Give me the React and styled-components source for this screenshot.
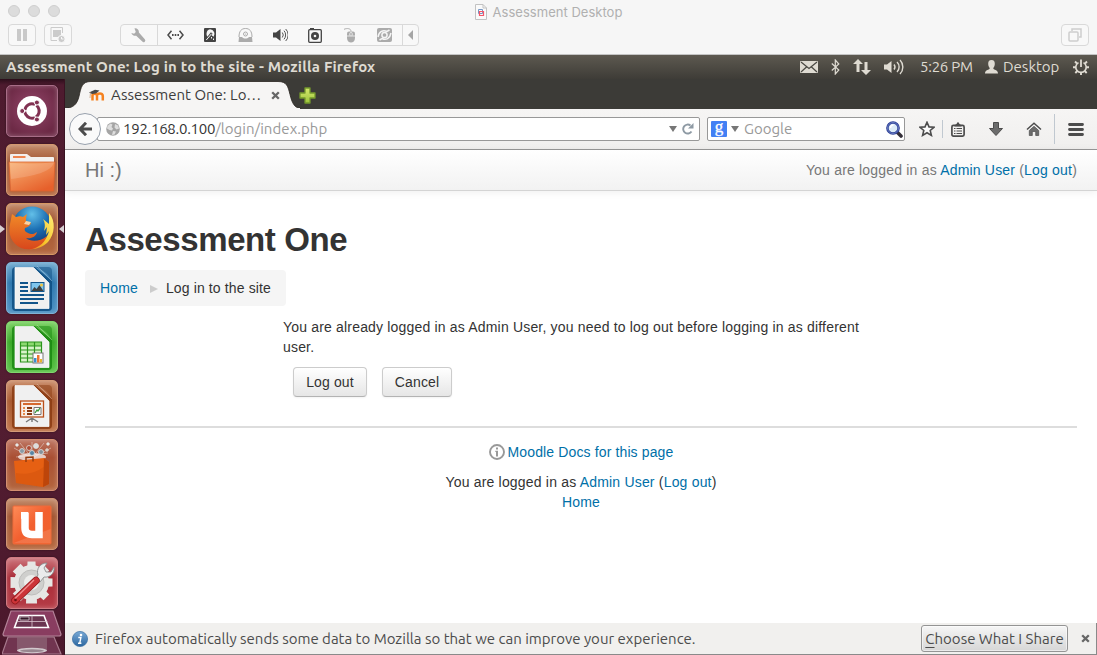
import React from "react";
import styled, { createGlobalStyle } from "styled-components";

const GlobalStyle = createGlobalStyle`
  * { box-sizing: border-box; }
  body { margin: 0; background: #fff; overflow: hidden; }
  svg { display: block; flex: none; }
  button { font: inherit; color: inherit; margin: 0; letter-spacing: inherit; }
`;

const UI_FONT = `Ubuntu, "Noto Sans", "Open Sans", sans-serif`;
const PAGE_FONT = `"Liberation Sans", Arial, sans-serif`;

const Screen = styled.div`
  width: 1097px;
  height: 655px;
  display: flex;
  flex-direction: column;
  overflow: hidden;
  font-family: ${UI_FONT};
  font-size: 15px;
`;

/* ---------- host window ---------- */
const HostBar = styled.header`
  height: 55px;
  flex: none;
  background: #f6f6f6;
  border-bottom: 1px solid #c4c4c4;
`;
const HostTitleRow = styled.div`
  height: 24px;
  display: grid;
  grid-template-columns: 1fr auto 1fr;
  align-items: center;
  padding: 0 8px 0 8px;
`;
const Lights = styled.div`
  display: flex;
  gap: 8px;
  padding-bottom: 2px;
`;
const Light = styled.i`
  width: 12px;
  height: 12px;
  border-radius: 50%;
  background: #dcdcdc;
  border: 1px solid #cfcfcf;
`;
const HostTitle = styled.div`
  display: flex;
  align-items: center;
  gap: 6px;
  font: 13px Inter, sans-serif;
  letter-spacing: 0.02px;
  color: #b0b0b0;
`;
const HostTools = styled.div`
  display: flex;
  padding: 0 8px;
  height: 22px;
`;
const HostButton = styled.button`
  width: ${(p) => p.$w || 28}px;
  height: 22px;
  margin-right: ${(p) => p.$gap || 0}px;
  margin-left: ${(p) => p.$push || 0};
  padding: 0;
  display: flex;
  align-items: center;
  justify-content: center;
  background: #f8f8f8;
  border: 1px solid #d9d9d9;
  border-radius: 4px;
`;
const ToolGroup = styled.div`
  width: 299px;
  display: flex;
  border: 1px solid #d9d9d9;
  border-radius: 4px;
  background: #f8f8f8;
`;
const Tool = styled.div`
  width: ${(p) => p.$w || 35}px;
  padding-right: 1px;
  display: flex;
  align-items: center;
  justify-content: center;
  border-right: ${(p) => (p.$line ? "1px solid #d9d9d9" : "0")};
`;

/* ---------- desktop panel ---------- */
const Panel = styled.div`
  height: 24px;
  flex: none;
  display: flex;
  align-items: center;
  background: linear-gradient(#5d5950, #3e3c37);
  color: #dfdbd2;
  padding: 0 8px 0 6px;
`;
const UiText = styled.span`
  font-family: ${UI_FONT};
  font-size: ${(p) => p.$size || 15}px;
  font-weight: ${(p) => p.$weight || 400};
  letter-spacing: ${(p) => p.$track || 0}px;
  color: ${(p) => p.$color || "inherit"};
  white-space: nowrap;
  line-height: 20px;
`;
const Indicators = styled.div`
  margin-left: auto;
  display: flex;
  align-items: center;
`;
const Slot = styled.div`
  width: ${(p) => p.$w}px;
  flex: none;
  display: flex;
  align-items: center;
`;
const Desktop = styled.div`
  flex: 1;
  min-height: 0;
  display: flex;
`;

/* ---------- launcher ---------- */
const Launcher = styled.nav`
  width: 65px;
  flex: none;
  padding: 6px 0 0 6px;
  display: flex;
  flex-direction: column;
  gap: 7px;
  background: linear-gradient(#2b0e1a 0, #4e1b2f 6px, #541e32 50%, #4b182c);
  border-right: 1px solid #3a1322;
`;
const Tile = styled.div`
  position: relative;
  width: 52px;
  height: 52px;
  flex: none;
  border-radius: 5px;
  background: ${(p) => p.$bg};
  border: 1px solid ${(p) => p.$edge};
  box-shadow: inset 0 0 5px rgba(255, 255, 255, 0.28), 0 0 2px rgba(0, 0, 0, 0.5);
  svg { margin: -1px; }
`;
const Marker = styled.i`
  position: absolute;
  top: 21px;
  ${(p) => (p.$right ? "right: -7px; border-right: 5px solid #d8d0d3;" : "left: -7px; border-left: 5px solid #d8d0d3;")}
  border-top: 4px solid transparent;
  border-bottom: 4px solid transparent;
`;
const Folded = styled.div`
  margin: -6px 0 0 -4px;
`;

/* ---------- browser ---------- */
const Browser = styled.main`
  flex: 1;
  min-width: 0;
  display: flex;
  flex-direction: column;
`;
const TabStrip = styled.div`
  height: 30px;
  flex: none;
  display: flex;
  align-items: flex-start;
  background: #3c3b37;
`;
const Tab = styled.div`
  position: relative;
  width: 235px;
  height: 30px;
  display: flex;
  align-items: center;
  padding: 2px 9px 0 24px;
`;
const TabShape = styled.svg`
  position: absolute;
  left: 0;
  top: 0;
`;
const TabLabel = styled.div`
  position: relative;
  flex: 1;
  display: flex;
  align-items: center;
  gap: 6px;
  color: #3c3c3c;
`;
const CloseGlyph = styled.div`
  margin-left: auto;
  margin-right: ${(p) => p.$right || 0}px;
`;
const NewTab = styled.div`
  margin: 8px 0 0 -1px;
`;
const NavBar = styled.div`
  height: 41px;
  flex: none;
  display: flex;
  align-items: center;
  background: linear-gradient(#f6f5f4, #f0efee);
  border-bottom: 1px solid #979797;
  padding: 0 13px 0 4px;
`;
const BackButton = styled.button`
  width: 32px;
  height: 32px;
  z-index: 1;
  flex: none;
  border-radius: 50%;
  border: 1px solid #98a1ad;
  background: #fafafa;
  padding: 0;
  display: flex;
  align-items: center;
  justify-content: center;
`;
const Field = styled.div`
  width: ${(p) => p.$w}px;
  height: 24px;
  flex: none;
  margin-left: ${(p) => p.$ml}px;
  padding: 0 ${(p) => p.$pr}px 0 ${(p) => p.$pl}px;
  display: flex;
  align-items: center;
  background: #fff;
  border: 1px solid #989898;
  border-radius: 2px;
`;
const FieldEnd = styled.div`
  margin-left: auto;
  display: flex;
  align-items: center;
  gap: 5px;
`;
const NavIcons = styled.div`
  margin-left: auto;
  display: flex;
  align-items: center;
`;
const Rule = styled.i`
  width: 1px;
  height: ${(p) => p.$h}px;
  margin: 0 ${(p) => p.$r}px 0 ${(p) => p.$l}px;
  background: #c0c8d0;
`;

/* ---------- web page ---------- */
const Page = styled.div`
  flex: 1;
  min-height: 0;
  background: #fff;
  color: #333;
  font: 14px/20px ${PAGE_FONT};
  letter-spacing: 0.13px;
`;
const SiteHeader = styled.div`
  height: 41px;
  display: flex;
  align-items: center;
  justify-content: space-between;
  padding: 0 20px;
  color: #777;
  background: linear-gradient(#fff, #f2f2f2);
  border-bottom: 1px solid #d4d4d4;
  box-shadow: 0 1px 8px rgba(0, 0, 0, 0.07);
`;
const SiteName = styled.div`
  font-size: 20px;
  letter-spacing: 0;
`;
const Copy = styled.span`
  letter-spacing: ${(p) => p.$track}px;
`;
const Link = styled.a`
  color: #0070a8;
  text-decoration: none;
`;
const PageBody = styled.div`
  padding: 29px 20px 0;
`;
const Heading = styled.h1`
  margin: 0;
  font-size: 33px;
  line-height: 40px;
  font-weight: 700;
  letter-spacing: -0.4px;
`;
const Crumbs = styled.div`
  margin-top: 10px;
  width: 201px;
  height: 36px;
  display: flex;
  align-items: center;
  padding: 0 15px;
  white-space: nowrap;
  background: #f5f5f5;
  border-radius: 4px;
`;
const CrumbArrow = styled.i`
  margin: 2px 8px 0 12px;
  border-left: 8px solid #ccc;
  border-top: 4px solid transparent;
  border-bottom: 4px solid transparent;
`;
const Notice = styled.div`
  width: 596px;
  margin: 11px auto 0;
`;
const Actions = styled.div`
  display: flex;
  gap: 15px;
  padding: 10px 10px 0;
`;
const PageButton = styled.button`
  width: ${(p) => p.$w}px;
  height: 30px;
  padding: 0;
  border: 1px solid #ccc;
  border-bottom-color: #b3b3b3;
  border-radius: 4px;
  background: linear-gradient(#fff, #e6e6e6);
  box-shadow: 0 1px 2px rgba(0, 0, 0, 0.05);
`;
const Footer = styled.footer`
  margin-top: 29px;
  border-top: 2px solid #ddd;
  padding-top: 14px;
  text-align: center;
`;
const Docs = styled.div`
  display: flex;
  justify-content: center;
  align-items: center;
  gap: 3px;
  margin-bottom: 10px;
`;

/* ---------- notification bar ---------- */
const NoticeBar = styled.div`
  height: 32px;
  flex: none;
  display: flex;
  align-items: center;
  gap: 7px;
  padding: 0 6px 0 7px;
  color: #4c4c4c;
  background: #f1f0ee;
  border-right: 1px solid #8a8a8a;
  border-bottom: 1px solid #8a8a8a;
`;
const ShareButton = styled.button`
  width: 147px;
  height: 27px;
  margin-left: auto;
  margin-right: 6px;
  padding: 0;
  border: 1px solid #949494;
  border-radius: 3px;
  background: linear-gradient(#f6f6f6, #d6d6d6);
  box-shadow: inset 0 0 0 1px rgba(255, 255, 255, 0.5);
  u { text-underline-offset: 3px; }
`;

const Cross = ({ color = "#666" }) => (
  <svg width="9" height="9" viewBox="0 0 9 9">
    <path d="M1.2 1.2l6.6 6.6M7.8 1.2L1.2 7.8" stroke={color} strokeWidth="2.3" />
  </svg>
);
const Down = () => (
  <svg width="8" height="6" viewBox="0 0 8 6"><path d="M0 0h8L4 6z" fill="#777" /></svg>
);

/* host toolbar icons */
const Pause = () => (
  <svg width="10" height="12"><path d="M0 0h4v12H0zM6 0h4v12H6z" fill="#c9c9c9" /></svg>
);
const Snapshot = () => (
  <svg width="16" height="16" viewBox="0 0 16 16" fill="none" stroke="#cbcbcb">
    <path d="M12.500 6V.500H1v13h6" /><path d="M3 3h8v7H3z" fill="#cbcbcb" stroke="none" />
    <circle cx="11.500" cy="12" r="3.600" fill="#cbcbcb" stroke="#f8f8f8" />
    <path d="M11.500 10v2h2" stroke="#f8f8f8" />
  </svg>
);
const Wrench = () => (
  <svg width="15" height="15" viewBox="0 0 15 15">
    <path d="M3.500.4C6 0 8.200 2 7.900 4.600l5.900 6.600a1.700 1.700 0 0 1-2.500 2.400L5.200 7.700C3.200 8.200.9 7 .4 4.900l2.700.8 1.700-1.800z" fill="#ababab" />
  </svg>
);
const Network = () => (
  <svg width="17" height="10" viewBox="0 0 17 10">
    <path d="M4.500.8L1 5l3.500 4.200M12.500.8L16 5l-3.500 4.200" fill="none" stroke="#4b4b4b" strokeWidth="1.500" />
    <path d="M5 4h1.600v2H5zM7.700 4h1.600v2H7.700zM10.400 4H12v2h-1.600z" fill="#4b4b4b" />
  </svg>
);
const Disk = () => (
  <svg width="12" height="14" viewBox="0 0 12 14">
    <rect width="12" height="14" rx="1" fill="#444" />
    <path d="M6 1.300a4.600 4.600 0 0 1 3.600 7.400L7.300 7 5 9.700A4.500 4.500 0 0 1 6 1.300z" fill="#f5f5f5" />
    <path d="M2 12.300L7.800 5" stroke="#444" strokeWidth="2.200" /><path d="M2.300 12L7.500 5.800M7.500 9v1.500M9.500 10.500V12" stroke="#f5f5f5" />
  </svg>
);
const Cd = () => (
  <svg width="15" height="14" viewBox="0 0 15 14">
    <path d="M1 9C1 3 3.500.5 7.500.5S14 3 14 9" fill="none" stroke="#ababab" />
    <circle cx="7.500" cy="6" r="2" fill="none" stroke="#ababab" /><circle cx="7.500" cy="6" r=".6" fill="#ababab" />
    <path d="M1 9h3c2 2 5 2 7 0h3l.5 5H.5z" fill="#ababab" />
  </svg>
);
const HostSound = () => (
  <svg width="15" height="14" viewBox="0 0 15 14">
    <path d="M0 4.500h3L7.500 1v12L3 9.500H0z" fill="#444" />
    <path d="M9.300 4.500a4 4 0 0 1 0 5M11 2.700a6.500 6.500 0 0 1 0 8.600M12.700 1a8.500 8.500 0 0 1 0 12" fill="none" stroke="#555" />
  </svg>
);
const Camera = () => (
  <svg width="14" height="15" viewBox="0 0 14 15">
    <path d="M2 0h4v2H2z" fill="#444" /><rect x=".7" y="1.700" width="12.600" height="12.600" rx="1" fill="none" stroke="#444" strokeWidth="1.300" />
    <circle cx="7" cy="8" r="4" fill="#444" /><circle cx="7" cy="8" r="1.300" fill="#f5f5f5" />
  </svg>
);
const Mouse = () => (
  <svg width="12" height="15" viewBox="0 0 12 15">
    <path d="M0 1.300c3-1.300 7-1 7 2" fill="none" stroke="#ababab" />
    <path d="M3 5.500q0-2 2-2h4q2 0 2 2V10c0 6-8 6-8 0z" fill="#ababab" />
    <path d="M3 8h3.500M7.500 8H11" stroke="#f5f5f5" strokeWidth=".8" /><rect x="5.800" y="4.500" width="2.400" height="3.500" rx="1" fill="#ababab" stroke="#f5f5f5" strokeWidth=".8" />
  </svg>
);
const Share = () => (
  <svg width="15" height="14" viewBox="0 0 15 14">
    <rect width="15" height="14" rx="2" fill="#ababab" />
    <circle cx="7.500" cy="7" r="2.600" fill="none" stroke="#f5f5f5" strokeWidth="1.500" />
    <path d="M1 9C2 3.500 6 1.500 10 3.500L12.500 2M14 5c-1 5.500-5 7.500-9 5.500L2.500 12" fill="none" stroke="#f5f5f5" strokeWidth="1.500" />
  </svg>
);
const Windows = () => (
  <svg width="14" height="14" viewBox="0 0 14 14" fill="none" stroke="#cdcdcd" strokeWidth="1.500">
    <path d="M4 3V1h9v8h-2" /><rect x="1" y="4" width="9" height="9" rx="1" />
  </svg>
);
const DocIcon = () => (
  <svg width="12" height="16" viewBox="0 0 12 16">
    <path d="M.5.5h7.500l3.500 3.500v11.500H.5z" fill="#fafafa" stroke="#c2c2c2" /><path d="M8 .5V4h3.500" fill="none" stroke="#c2c2c2" />
    <path d="M3.500 5.500h4v4h-4z" fill="none" stroke="#7596c4" /><path d="M4.500 7.500h4v4h-4z" fill="none" stroke="#f3576a" strokeWidth="1.200" />
  </svg>
);

/* panel indicators */
const Mail = () => (
  <svg width="18" height="12" viewBox="0 0 18 12">
    <rect width="18" height="12" rx="1" fill="#dfdbd2" />
    <path d="M1 1l8 6.500L17 1M1 11l5.500-5M17 11l-5.500-5" fill="none" stroke="#4a4842" strokeWidth="1.200" />
  </svg>
);
const Bluetooth = () => (
  <svg width="9" height="16" viewBox="0 0 9 16">
    <path d="M.8 4.500l7 6.500L4.300 15V1L7.800 5l-7 6.500" fill="none" stroke="#dfdbd2" strokeWidth="1.200" />
  </svg>
);
const Arrows = () => (
  <svg width="18" height="16" viewBox="0 0 18 16" fill="#dfdbd2">
    <path d="M5 0l5 5H6.500v8h-3V5H0zM13 16l5-5h-3.500V3h-3v8H8z" />
  </svg>
);
const Sound = () => (
  <svg width="20" height="16" viewBox="0 0 20 16">
    <path d="M0 5.500h3L7.500 2v12L3 10.500H0z" fill="#dfdbd2" />
    <path d="M10 5.500a4 4 0 0 1 0 5M13 3a7 7 0 0 1 0 10M16 1a10 10 0 0 1 0 14" fill="none" stroke="#dfdbd2" strokeWidth="1.400" />
  </svg>
);
const Person = () => (
  <svg width="13" height="14" viewBox="0 0 13 14" fill="#dfdbd2">
    <path d="M6.500 0C9 0 9.800 1.500 9.800 4S8.500 7 8.300 8.500C8.300 10 13 9.600 13 13.500H0C0 9.600 4.700 10 4.700 8.500 4.500 7 3.200 6.500 3.200 4S4 0 6.500 0z" />
  </svg>
);
const Power = () => (
  <svg width="16" height="16" viewBox="0 0 16 16" fill="none" stroke="#dfdbd2">
    <path d="M5.500 3.600a5.200 5.200 0 1 0 5 0" strokeWidth="1.600" /><path d="M8 .5V8" strokeWidth="1.800" />
    <path d="M0 8.200h3M13 8.200h3M8 13v3M2 2.500l2 2M14 2.500l-2 2M2.300 14l2-2M13.700 14l-2-2" strokeWidth="1.900" />
  </svg>
);

/* browser icons */
const MoodleIcon = () => (
  <svg width="16" height="12" viewBox="0 0 16 12">
    <path d="M3.500 11.500V6.500c0-2.500 4.500-2.500 4.500 0v5-5c0-2.500 5.800-3 5.800.5v4.500" fill="none" stroke="#f58220" strokeWidth="2.500" />
    <path d="M0 3.500L6 .8l4.500.6L7 4.500 3 5z" fill="#484848" /><path d="M1.500 3.500L1 9" stroke="#c9a27e" strokeWidth=".8" />
  </svg>
);
const Plus = () => (
  <svg width="17" height="17" viewBox="0 0 17 17">
    <defs><linearGradient id="plus" x2="0" y2="1"><stop stopColor="#d5e86d" /><stop offset="1" stopColor="#9dc43c" /></linearGradient></defs>
    <path d="M6 1h5v5h5v5h-5v5H6v-5H1V6h5z" fill="url(#plus)" stroke="#74992c" strokeWidth="1.300" strokeLinejoin="round" />
  </svg>
);
const BackArrow = () => (
  <svg width="15" height="14" viewBox="0 0 15 14">
    <path d="M8 .8L2 7l6 6.200M2.500 7H14" fill="none" stroke="#4c4c4c" strokeWidth="3" />
  </svg>
);
const Globe = () => (
  <svg width="14" height="14" viewBox="0 0 14 14">
    <circle cx="7" cy="7" r="6.800" fill="#a5a5a5" />
    <path d="M1.500 4l3-2.500 2 1L5.500 5l1.500 1.500-1 2L3.500 8 1 6.500zM9 2l3 1.500 1 3-2.500 1L8.500 5.500zM7 9l3 .5-1.500 3L6 13z" fill="#dedede" />
  </svg>
);
const Reload = () => (
  <svg width="12" height="12" viewBox="0 0 12 12">
    <path d="M9.500 8.500a4.500 4.500 0 1 1-1-6" fill="none" stroke="#8e9aa4" strokeWidth="1.900" /><path d="M11.500 0v5.500H6z" fill="#8e9aa4" />
  </svg>
);
const GoogleBadge = styled.div`
  width: 16px;
  height: 16px;
  border-radius: 1px;
  background: #4280f4;
  color: #fff;
  font: 17px/11px "Liberation Serif", serif;
  -webkit-text-stroke: 0.3px #fff;
  text-align: center;
  margin-right: 4px;
`;
const Lens = () => (
  <svg width="17" height="17" viewBox="0 0 17 17">
    <path d="M11 11l4 4" stroke="#332e38" strokeWidth="3.600" strokeLinecap="round" />
    <circle cx="7" cy="7" r="5.600" fill="#dcebf7" stroke="#2c3f95" strokeWidth="2.500" />
    <circle cx="7" cy="7" r="5.500" fill="none" stroke="#7d91d2" strokeWidth=".7" />
    <path d="M4.500 7c0-2 1-3 3-3" fill="none" stroke="#fff" strokeWidth="1.500" />
  </svg>
);
const Star = () => (
  <svg width="16" height="16" viewBox="0 0 16 16">
    <path d="M8 1.300l2 4.600 5 .4-3.800 3.200 1.200 4.900L8 11.800l-4.400 2.600 1.200-4.900L1 6.300l5-.4z" fill="#fbfbfb" stroke="#4c4c4c" strokeWidth="1.600" />
  </svg>
);
const Clipboard = () => (
  <svg width="14" height="15" viewBox="0 0 14 15">
    <rect x=".9" y="3.400" width="12.200" height="10.700" rx="1.500" fill="none" stroke="#4c4c4c" strokeWidth="1.700" />
    <path d="M3.500 3c1-.5 2-.6 2.300-1.600C6.200 0 7.800 0 8.200 1.400 8.500 2.400 9.500 2.500 10.500 3v1.500h-7z" fill="#4c4c4c" />
    <path d="M3 6.500h1.500M3 9h1.500M3 11.500h1.500M5.500 6.500H11M5.500 9H11M5.500 11.500H11" stroke="#4c4c4c" strokeWidth="1.200" />
  </svg>
);
const Download = () => (
  <svg width="14" height="14" viewBox="0 0 14 14">
    <path d="M4.500.5h5v6h4L7 13.500.5 6.500h4z" fill="#6c6c6c" stroke="#4c4c4c" />
  </svg>
);
const HomeIcon = () => (
  <svg width="16" height="14" viewBox="0 0 16 14">
    <path d="M1 7.500l7-6.200 7 6.200" fill="none" stroke="#4c4c4c" strokeWidth="1.500" />
    <path d="M3.300 8.500L8 4.300l4.700 4.200v5H9.700V9.500H6.300v4h-3z" fill="#6c6c6c" stroke="#4c4c4c" strokeWidth=".7" />
  </svg>
);
const Menu = () => (
  <svg width="16" height="13" viewBox="0 0 16 13">
    <path d="M1.500 1.500h13M1.500 6.500h13M1.500 11.500h13" stroke="#4c4c4c" strokeWidth="2.800" strokeLinecap="round" />
  </svg>
);
const InfoRing = () => (
  <svg width="16" height="16" viewBox="0 0 16 16">
    <circle cx="8" cy="8" r="7" fill="none" stroke="#999" strokeWidth="1.900" />
    <path d="M7 3.500h2v2H7zM6.300 6.700H9v5.800H7V8h-.7z" fill="#999" />
  </svg>
);
const InfoBall = () => (
  <svg width="16" height="16" viewBox="0 0 16 16">
    <defs><linearGradient id="ball" x2="0" y2="1"><stop stopColor="#79a9d6" /><stop offset="1" stopColor="#2b669f" /></linearGradient></defs>
    <circle cx="8" cy="8" r="7.600" fill="url(#ball)" stroke="#3a6fa4" strokeWidth=".7" />
    <circle cx="9" cy="4" r="1.300" fill="#fff" /><path d="M6.300 6.500h2.600l-1.200 5.800M6 12.300h3.400" fill="none" stroke="#fff" strokeWidth="1.400" />
  </svg>
);

/* launcher artwork, each on a 52 x 52 tile */
const Dash = () => (
  <svg width="52" height="52" viewBox="0 0 52 52">
    <circle cx="26" cy="26" r="15" fill="#fff" />
    <circle cx="26" cy="26" r="7.200" fill="none" stroke="#813152" strokeWidth="3" strokeDasharray="13.500 1.580" strokeDashoffset="-.8" transform="rotate(60 26 26)" />
    {[60, 180, 300].map((a) => (
      <circle key={a} cx={26 + 9.8 * Math.cos((a * Math.PI) / 180)} cy={26 + 9.8 * Math.sin((a * Math.PI) / 180)} r="2.500" fill="#813152" stroke="#fff" strokeWidth="1" />
    ))}
  </svg>
);
const Folder = () => (
  <svg width="52" height="52" viewBox="0 0 52 52">
    <defs><linearGradient id="folder" x1="0" y1="0" x2=".7" y2="1"><stop stopColor="#f8b173" /><stop offset="1" stopColor="#e6602b" /></linearGradient></defs>
    <path d="M4 18v-7q0-1 1-1h16l4 3h22q1 0 1 1v5H4z" fill="#f3f0ee" />
    <path d="M7 12h12.500v2H7z" fill="#ee8550" />
    <path d="M3 18h46l-1.500 29h-43z" fill="url(#folder)" stroke="#d9622f" strokeWidth=".8" />
    <path d="M4 19c15 1 32 1 44-1-2 10-20 14-43 17z" fill="#fff" opacity=".15" />
  </svg>
);
const Fox = () => (
  <svg width="52" height="52" viewBox="0 0 52 52">
    <defs>
      <radialGradient id="sea" cx=".5" cy=".2" r=".8"><stop stopColor="#62bfe8" /><stop offset=".5" stopColor="#1c70b4" /><stop offset="1" stopColor="#133a79" /></radialGradient>
      <linearGradient id="fur" x2="0" y2="1"><stop stopColor="#f18a28" /><stop offset="1" stopColor="#d8471c" /></linearGradient>
      <linearGradient id="tail" x1="1" y1="0" x2="0" y2="1"><stop stopColor="#fff07a" /><stop offset=".6" stopColor="#f7c52a" /><stop offset="1" stopColor="#ec7423" /></linearGradient>
    </defs>
    <circle cx="26" cy="23" r="19.500" fill="url(#sea)" />
    <path d="M43 10c7 8 6 21-1 29-5 5-13 8-19 7 10-3 18-9 20-18l-3 4 1-8-3 4c2-7 0-10-1-12l6 5z" fill="url(#tail)" />
    <path d="M6 11l4 3c3-1 5-1 7 0l4-3c-1 3-1 5-1 7l5 2c-1 3-3 4-6 5-1 2 0 4 3 5 4 2 6 1 9-1-1 5-6 7-11 6 4 4 14 4 21-2-4 11-16 16-26 12C5 40 2 31 4 21l1-5z" fill="url(#fur)" />
    <path d="M20 18l5 1-2 3-5-1z" fill="#f9d3a4" />
  </svg>
);
const DocBase = ({ dark, children }) => (
  <svg width="52" height="52" viewBox="0 0 52 52">
    <path d="M6 9q0-4 4-4h19l17 14v26q0 4-4 4H10q-4 0-4-4z" fill={dark} opacity=".85" />
    <path d="M29 5C37 8 43 12 46 19V9q0-4-4-4z" fill={dark} opacity=".5" />
    <path d="M31 4l15 15" stroke="#fff" strokeWidth="1" opacity=".25" />
    <path d="M9 5.500h18.500L43 21v25.500H9z" fill="#f0f0f0" stroke="#fff" strokeWidth=".7" />
    {children}
  </svg>
);
const Writer = () => (
  <DocBase dark="#0d4c80">
    <path d="M14 21h8M14 25h8M14 29h8M14 33h24M14 37h24M14 41h18" stroke="#12558b" strokeWidth="2" />
    <rect x="25" y="20.500" width="13" height="9" fill="#7ec5ed" stroke="#12558b" /><path d="M25.500 29l3-4 2 2 3-4 4 6z" fill="#3d4142" /><circle cx="35.500" cy="23" r="1.500" fill="#f3c43d" />
  </DocBase>
);
const Calc = () => (
  <DocBase dark="#1a8710">
    <rect x="14.500" y="21" width="21" height="20" fill="#d8f3ca" /><path d="M14.500 21h21v4h-21z" fill="#8cd870" />
    <path d="M14.500 21h21v20h-21zM14.500 25h21M14.500 29h21M14.500 33h21M14.500 37h21M21.500 21v20M28.500 21v20" fill="none" stroke="#2a941c" strokeWidth="1.200" />
    <rect x="27" y="32" width="10" height="10" fill="#fff" stroke="#777" /><path d="M28 37h2.500v4.500H28z" fill="#3b8ccd" /><path d="M31 34h2.500v7.500H31z" fill="#ed7530" /><path d="M34 38h2v3.500h-2z" fill="#e8b52b" />
  </DocBase>
);
const Impress = () => (
  <DocBase dark="#893b12">
    <rect x="14.500" y="21" width="23" height="16" fill="#f8efe8" stroke="#b8501d" strokeWidth="1.300" />
    <path d="M17 24h18" stroke="#d66a2f" strokeWidth="2" /><path d="M17 28h2M17 31h2M17 34h2" stroke="#e58b4d" strokeWidth="2" /><path d="M21 28h5M21 31h5M21 34h5" stroke="#893b12" strokeWidth="2" />
    <path d="M28 27.500h7v7h-7z" fill="#fff" stroke="#777" /><path d="M29 33l2-3 1 1 2-3" fill="none" stroke="#38963a" strokeWidth="1.300" />
    <path d="M26 38l-6 4M26 38l6 4M26 38v4" stroke="#777" strokeWidth="1.400" />
  </DocBase>
);
const Bag = () => (
  <svg width="52" height="52" viewBox="0 0 52 52">
    <path d="M26 19L8 9m18 10L14 4m12 15L26 3m0 16L38 4m-12 15l19-10M10 18l32-4" stroke="#fff" strokeWidth="1" opacity=".4" />
    <ellipse cx="26" cy="18" rx="14" ry="4" fill="#fff" opacity=".7" />
    {[[16, 12, "#8a9ba6"], [23, 9, "#b04b36"], [30, 7, "#ddd"], [35, 13, "#84929b"], [26, 14, "#5785a4"], [41, 11, "#d9c3b1"], [42, 5, "#eee"], [11, 6, "#eee"]].map(([x, y, c]) => (
      <circle key={x} cx={x} cy={y} r={x > 40 || x < 12 ? 1.3 : 2.5} fill={c} stroke="#dfe1e0" strokeWidth=".8" />
    ))}
    <path d="M8 22l30-3 5 4v22l-6 3-27-4z" fill="#e66013" /><path d="M38 19l5 4v22l-6 3z" fill="#bd450a" />
    <path d="M20 23v-4.500l7-.5v4.500" fill="none" stroke="#943c10" strokeWidth="1.500" /><path d="M10 34c10 2 20 0 27.500-6L37 48l-27-4z" fill="#c94d0c" opacity=".35" />
  </svg>
);
const UbuntuOne = () => (
  <svg width="52" height="52" viewBox="0 0 52 52">
    <defs><linearGradient id="uone" x2="1" y2="1"><stop stopColor="#ff8c58" /><stop offset=".5" stopColor="#f26030" /><stop offset="1" stopColor="#f0642e" /></linearGradient></defs>
    <rect x="7" y="8" width="38" height="38" rx="1" fill="url(#uone)" stroke="#ee6a3b" />
    <path d="M7.500 45l37-14V45z" fill="#fff" opacity=".12" />
    <path d="M19 15v15q0 6.500 7 6.500h7V14" fill="none" stroke="#fff" strokeWidth="7.500" /><path d="M15 14h7.500l-1.500 5-6 2z" fill="#fff" />
  </svg>
);
const Settings = () => (
  <svg width="52" height="52" viewBox="0 0 52 52">
    <defs><linearGradient id="handle" x1="0" y1="0" x2="1" y2="1"><stop stopColor="#e65757" /><stop offset="1" stopColor="#a01318" /></linearGradient></defs>
    <g fill="#e6e6e4">
      {[0, 45, 90, 135].map((a) => <path key={a} d="M21.500 4.500h8l1.500 42H20z" transform={`rotate(${a} 25.500 25.500)`} />)}
      <circle cx="25.500" cy="25.500" r="17.500" />
    </g>
    <circle cx="25.500" cy="25.500" r="12.500" fill="#cfcfcd" stroke="#bdbdbb" /><circle cx="25.500" cy="25.500" r="7.500" fill="#ededeb" />
    <path d="M29 23l3-5c-2-6 2-12 9-12l-3 5 2 4 5 0 3-5c1 6-4 11-10 10l-4 5z" fill="#eaebec" stroke="#8b8d8f" strokeWidth=".9" />
    <path d="M9 43.500L30 23.500" stroke="#8e171a" strokeWidth="7.400" strokeLinecap="round" /><path d="M9 43.500L30 23.500" stroke="#cc3438" strokeWidth="6" strokeLinecap="round" />
    <path d="M9 41.500L28 23" stroke="#f08e8e" strokeWidth="1.300" /><circle cx="9.500" cy="43" r="1.300" fill="#6d1115" />
  </svg>
);
const FoldedStack = () => (
  <svg width="60" height="45" viewBox="0 0 60 45">
    <path d="M6 27h46l7 17H0z" fill="#713550" stroke="#a77a8d" strokeWidth="1.200" />
    <path d="M15 27h30v13q-15-4-30 0z" fill="#8c6173" opacity=".8" /><ellipse cx="30" cy="40.500" rx="15" ry="2.800" fill="#d2c9cd" /><ellipse cx="30" cy="40.800" rx="12" ry="1.500" fill="#98868f" />
    <path d="M9 1h42l8 23q0 2-2 2H3q-2 0-2-2z" fill="#893d60" stroke="#b38297" strokeWidth="1.200" />
    <path d="M17 5.500h25l4.500 12h-34z" fill="#6a3550" stroke="#fff" strokeWidth="1.600" /><path d="M30 5.500v12M14.500 11.500h31" stroke="#d9c5ce" strokeWidth=".8" /><path d="M18 7h9v3h-9z" fill="#361728" stroke="#ddd" strokeWidth=".7" />
  </svg>
);

const orange = "linear-gradient(#c28a69, #a25532 35%, #b5683f)";
const apps = [
  { art: Dash, bg: "radial-gradient(circle at 50% 45%, #94466a, #6d2a46 75%)", edge: "#a86d87" },
  { art: Folder, bg: orange, edge: "#d4986f" },
  { art: Fox, bg: orange, edge: "#d89863", active: true },
  { art: Writer, bg: "linear-gradient(#6fa9ce, #2c76ae 40%, #4a90c2)", edge: "#7fb2d6" },
  { art: Calc, bg: "linear-gradient(#7bd163, #38a826 40%, #57c044)", edge: "#80d56d" },
  { art: Impress, bg: "linear-gradient(#c98b68, #a8572d 40%, #bd7044)", edge: "#d49a78" },
  { art: Bag, bg: "linear-gradient(#bd7460, #a94f33 35%, #b4653d)", edge: "#d48e70" },
  { art: UbuntuOne, bg: orange, edge: "#cf9272" },
  { art: Settings, bg: "linear-gradient(#cd757c, #a92b37 40%, #b53c46)", edge: "#d07a82" },
];

const hostTools = [Network, Disk, Cd, HostSound, Camera, Mouse, Share];

const Login = () => (
  <Copy $track={0.19}>You are logged in as <Link>Admin User</Link> (<Link>Log out</Link>)</Copy>
);

export default function App() {
  return (
    <Screen>
      <GlobalStyle />
      <HostBar>
        <HostTitleRow>
          <Lights><Light /><Light /><Light /></Lights>
          <HostTitle><DocIcon />Assessment Desktop</HostTitle>
        </HostTitleRow>
        <HostTools>
          <HostButton $gap={8}><Pause /></HostButton>
          <HostButton $gap={48}><Snapshot /></HostButton>
          <ToolGroup>
            <Tool $w={37} $line><Wrench /></Tool>
            {hostTools.map((Icon, i) => <Tool key={i} $line={i === 6}><Icon /></Tool>)}
            <Tool $w={15}><svg width="5" height="10"><path d="M5 0v10L0 5z" fill="#a5a5a5" /></svg></Tool>
          </ToolGroup>
          <HostButton $push="auto"><Windows /></HostButton>
        </HostTools>
      </HostBar>

      <Panel>
        <UiText $weight={700} $track={0.18}>Assessment One: Log in to the site - Mozilla Firefox</UiText>
        <Indicators>
          <Slot $w={31}><Mail /></Slot>
          <Slot $w={22}><Bluetooth /></Slot>
          <Slot $w={31}><Arrows /></Slot>
          <Slot $w={36}><Sound /></Slot>
          <Slot $w={65}><UiText $track={-0.25}>5:26 PM</UiText></Slot>
          <Slot $w={18}><Person /></Slot>
          <Slot $w={70}><UiText>Desktop</UiText></Slot>
          <Power />
        </Indicators>
      </Panel>

      <Desktop>
        <Launcher>
          {apps.map(({ art: Art, bg, edge, active }, i) => (
            <Tile key={i} $bg={bg} $edge={edge}>
              <Art />
              {active && <><Marker /><Marker $right /></>}
            </Tile>
          ))}
          <Folded><FoldedStack /></Folded>
        </Launcher>

        <Browser>
          <TabStrip>
            <Tab>
              <TabShape width="240" height="30" viewBox="0 0 240 30">
                <path d="M0 30v-.5c8-.5 12-4 14-12C16 8 17 2.500 26 2.500h187c9 0 10 5 12 13s4 13.500 11 14v.5z" fill="#f6f5f4" stroke="#29251f" strokeWidth=".8" />
                <path d="M0 29.500h235" stroke="#f6f5f4" />
              </TabShape>
              <TabLabel>
                <MoodleIcon />
                <UiText>Assessment One: Lo…</UiText>
                <CloseGlyph $right={11}><Cross /></CloseGlyph>
              </TabLabel>
            </Tab>
            <NewTab><Plus /></NewTab>
          </TabStrip>

          <NavBar>
            <BackButton><BackArrow /></BackButton>
            <Field $w={603} $ml={-4} $pl={8} $pr={5}>
              <Slot $w={17}><Globe /></Slot>
              <UiText $color="#333" $track={-0.27}>192.168.0.100</UiText>
              <UiText $color="#999" $track={0.05}>/login/index.php</UiText>
              <FieldEnd><Down /><Reload /></FieldEnd>
            </Field>
            <Field $w={198} $ml={7} $pl={3} $pr={1}>
              <GoogleBadge>g</GoogleBadge>
              <Slot $w={13}><Down /></Slot>
              <UiText $color="#999">Google</UiText>
              <FieldEnd><Lens /></FieldEnd>
            </Field>
            <NavIcons>
              <Star />
              <Rule $h={18} $l={7} $r={8} />
              <Slot $w={38}><Clipboard /></Slot>
              <Slot $w={37}><Download /></Slot>
              <HomeIcon />
              <Rule $h={30} $l={12} $r={13} />
              <Menu />
            </NavIcons>
          </NavBar>

          <Page>
            <SiteHeader><SiteName>Hi :)</SiteName><Login /></SiteHeader>
            <PageBody>
              <Heading>Assessment One</Heading>
              <Crumbs><Link>Home</Link><CrumbArrow />Log in to the site</Crumbs>
              <Notice>
                <Copy $track={0.18}>You are already logged in as Admin User, you need to log out before logging in as different user.</Copy>
                <Actions><PageButton $w={74}>Log out</PageButton><PageButton $w={70}>Cancel</PageButton></Actions>
              </Notice>
              <Footer>
                <Docs><InfoRing /><Link>Moodle Docs for this page</Link></Docs>
                <Login /><br /><Link>Home</Link>
              </Footer>
            </PageBody>
          </Page>

          <NoticeBar>
            <InfoBall />
            <UiText>Firefox automatically sends some data to Mozilla so that we can improve your experience.</UiText>
            <ShareButton><UiText><u>C</u>hoose What I Share</UiText></ShareButton>
            <Cross />
          </NoticeBar>
        </Browser>
      </Desktop>
    </Screen>
  );
}
